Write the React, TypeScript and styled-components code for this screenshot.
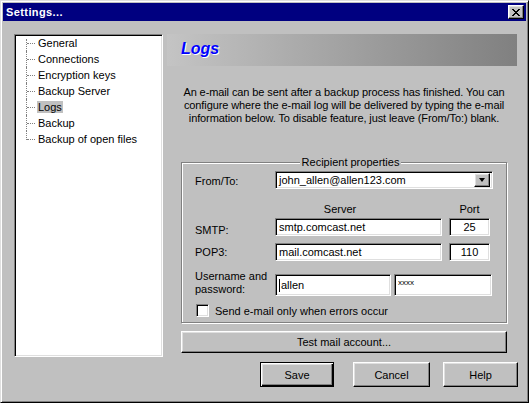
import React from "react";
import styled, { createGlobalStyle, css } from "styled-components";

const GlobalStyle = createGlobalStyle`
  html, body {
    margin: 0;
    padding: 0;
    background: #ffffff;
  }
  body {
    font-family: "Liberation Sans", Arial, sans-serif;
    font-size: 11px;
    color: #000;
  }
`;

const raised = css`
  border: 1px solid;
  border-color: #ffffff #000000 #000000 #ffffff;
  box-shadow: inset -1px -1px #808080, inset 1px 1px #dfdfdf;
`;

const sunken = css`
  border: 1px solid;
  border-color: #808080 #ffffff #ffffff #808080;
  box-shadow: inset 1px 1px #000000, inset -1px -1px #dfdfdf;
`;

const Window = styled.div`
  box-sizing: border-box;
  width: 529px;
  height: 403px;
  padding: 3px;
  background: #c0c0c0;
  border: 1px solid;
  border-color: #dfdfdf #000000 #000000 #dfdfdf;
  box-shadow: inset 1px 1px #ffffff, inset -1px -1px #808080;
  display: flex;
  flex-direction: column;
`;

const TitleBar = styled.div`
  height: 18px;
  margin: -1px -1px 0 -1px;
  background: #000080;
  display: flex;
  align-items: center;
  justify-content: space-between;
  padding: 0 2px 0 3px;
`;

const Title = styled.span`
  color: #ffffff;
  font-weight: bold;
  font-size: 11px;
  letter-spacing: 0.4px;
`;

const CloseButton = styled.div`
  box-sizing: border-box;
  width: 16px;
  height: 14px;
  background: #c0c0c0;
  ${raised};
  display: flex;
  align-items: center;
  justify-content: center;
`;

const Body = styled.div`
  display: flex;
  gap: 4px;
  padding: 13px 0 0 10px;
`;

const Tree = styled.ul`
  box-sizing: border-box;
  width: 149px;
  height: 323px;
  margin: 0;
  padding: 0 0 0 11px;
  list-style: none;
  background: #ffffff;
  ${sunken};
`;

const TreeItem = styled.li<{ $first?: boolean; $last?: boolean }>`
  position: relative;
  height: 16px;
  line-height: 16px;
  padding-left: 11px;

  &::before {
    content: "";
    position: absolute;
    left: 1px;
    top: 8px;
    width: 8px;
    border-top: 1px dotted #808080;
  }

  &::after {
    content: "";
    position: absolute;
    left: 0;
    top: ${(p) => (p.$first ? "4px" : "0")};
    height: ${(p) => (p.$last ? "9px" : p.$first ? "12px" : "16px")};
    border-left: 1px dotted #808080;
  }
`;

const ItemLabel = styled.span<{ $selected?: boolean }>`
  display: inline-block;
  line-height: 12px;
  padding: 0 1px;
  background: ${(p) => (p.$selected ? "#c0c0c0" : "transparent")};
`;

const Panel = styled.div`
  width: 350px;
  display: flex;
  flex-direction: column;
`;

const Header = styled.div`
  box-sizing: border-box;
  height: 32px;
  padding: 5px 0 0 14px;
  background: linear-gradient(to right, #c4c4c4, #808080);
`;

const HeaderTitle = styled.span`
  font-size: 16px;
  line-height: 20px;
  font-weight: bold;
  font-style: italic;
  color: #0000ff;
  text-shadow: 1px 1px 0 #ffffff;
`;

const Intro = styled.p`
  margin: 20px 0 0 4px;
  line-height: 13px;
  text-align: center;
  letter-spacing: -0.1px;
`;

const Inner = styled.div`
  margin: 0 10px 0 14px;
  display: flex;
  flex-direction: column;
`;

const Group = styled.fieldset`
  margin: 31px 0 0 0;
  padding: 2px 0 5px 13px;
  border: 1px solid #808080;
  box-shadow: inset 1px 1px #ffffff, 1px 1px #ffffff;
  display: flex;
  flex-direction: column;
`;

const Legend = styled.legend`
  margin: 0 auto;
  padding: 0 2px;
  line-height: 13px;
  background: #c0c0c0;
`;

const Row = styled.div<{ $gap?: number; $end?: boolean }>`
  display: flex;
  align-items: ${(p) => (p.$end ? "flex-end" : "center")};
  margin-top: ${(p) => p.$gap ?? 0}px;
`;

const Label = styled.span<{ $drop?: number }>`
  width: 80px;
  flex: none;
  line-height: 13px;
  position: relative;
  top: ${(p) => p.$drop ?? 0}px;
`;

const ColumnHead = styled.span<{ $width: number; $shift?: number }>`
  width: ${(p) => p.$width}px;
  text-align: center;
  line-height: 13px;
  margin-left: ${(p) => p.$shift ?? 0}px;
`;

const Field = styled.div<{ $width: number; $height?: number; $center?: boolean }>`
  box-sizing: border-box;
  width: ${(p) => p.$width}px;
  height: ${(p) => p.$height ?? 18}px;
  flex: none;
  padding: 0 3px;
  background: #ffffff;
  ${sunken};
  display: flex;
  align-items: center;
  justify-content: ${(p) => (p.$center ? "center" : "flex-start")};
  white-space: nowrap;
  overflow: hidden;
`;

const Caret = styled.span`
  width: 1px;
  height: 13px;
  background: #000;
  margin-right: 1px;
`;

const Masked = styled.span`
  align-self: flex-start;
  margin-top: 4px;
  font-size: 8px;
  line-height: 8px;
`;

const DropButton = styled.div`
  box-sizing: border-box;
  width: 16px;
  height: 14px;
  margin-left: auto;
  margin-right: -1px;
  background: #c0c0c0;
  ${raised};
  display: flex;
  align-items: center;
  justify-content: center;
`;

const Arrow = styled.span`
  width: 0;
  height: 0;
  border-left: 3.5px solid transparent;
  border-right: 3.5px solid transparent;
  border-top: 4px solid #000;
`;

const Check = styled.span`
  box-sizing: border-box;
  width: 13px;
  height: 13px;
  margin: 0 6px 0 1px;
  background: #ffffff;
  ${sunken};
`;

const Button = styled.button<{
  $width?: number;
  $height?: number;
  $default?: boolean;
  $after?: number;
}>`
  box-sizing: border-box;
  width: ${(p) => (p.$width ? `${p.$width}px` : "100%")};
  height: ${(p) => p.$height ?? 25}px;
  margin: 0 ${(p) => p.$after ?? 0}px 0 0;
  padding: 0;
  font: inherit;
  color: #000;
  background: #c0c0c0;
  ${(p) =>
    p.$default
      ? css`
          border: 1px solid #000;
          box-shadow: inset 1px 1px #ffffff, inset -1px -1px #000000,
            inset -2px -2px #808080, inset 2px 2px #dfdfdf;
        `
      : raised};
`;

const TestButton = styled(Button)`
  margin-top: 8px;
`;

const Actions = styled.div`
  display: flex;
  justify-content: flex-end;
  align-items: center;
  gap: 13px;
  margin: 9px -1px 0 0;
`;

const items = [
  "General",
  "Connections",
  "Encryption keys",
  "Backup Server",
  "Logs",
  "Backup",
  "Backup of open files",
];

export default function App() {
  return (
    <>
      <GlobalStyle />
      <Window>
        <TitleBar>
          <Title>Settings...</Title>
          <CloseButton>
            <svg width="8" height="7" viewBox="0 0 8 7">
              <path
                d="M0 0h2v1h1v1h2V1h1V0h2v1H7v1H6v1H5v1h1v1h1v1h1v1H6V6H5V5H3v1H2v1H0V6h1V5h1V4h1V3H2V2H1V1H0z"
                fill="#000"
              />
            </svg>
          </CloseButton>
        </TitleBar>
        <Body>
          <Tree>
            {items.map((name, i) => (
              <TreeItem
                key={name}
                $first={i === 0}
                $last={i === items.length - 1}
              >
                <ItemLabel $selected={name === "Logs"}>{name}</ItemLabel>
              </TreeItem>
            ))}
          </Tree>
          <Panel>
            <Header>
              <HeaderTitle>Logs</HeaderTitle>
            </Header>
            <Intro>
              An e-mail can be sent after a backup process has finished. You can
              <br />
              configure where the e-mail log will be delivered by typing the e-mail
              <br />
              information below. To disable feature, just leave (From/To:) blank.
            </Intro>
            <Inner>
              <Group>
                <Legend>Recipient properties</Legend>
                <Row>
                  <Label $drop={1}>From/To:</Label>
                  <Field $width={218}>
                    john_allen@allen123.com
                    <DropButton>
                      <Arrow />
                    </DropButton>
                  </Field>
                </Row>
                <Row $gap={14}>
                  <ColumnHead $width={130} $shift={80}>
                    Server
                  </ColumnHead>
                  <ColumnHead $width={41} $shift={44}>
                    Port
                  </ColumnHead>
                </Row>
                <Row $gap={2}>
                  <Label $drop={3}>SMTP:</Label>
                  <Field $width={167}>smtp.comcast.net</Field>
                  <Field $width={41} $center style={{ marginLeft: 7 }}>
                    25
                  </Field>
                </Row>
                <Row $gap={7}>
                  <Label>POP3:</Label>
                  <Field $width={167}>mail.comcast.net</Field>
                  <Field $width={41} $center style={{ marginLeft: 7 }}>
                    110
                  </Field>
                </Row>
                <Row $gap={9} $end>
                  <Label>
                    Username and
                    <br />
                    password:
                  </Label>
                  <Field $width={116} $height={22}>
                    <Caret />
                    allen
                  </Field>
                  <Field $width={98} $height={22} style={{ marginLeft: 3 }}>
                    <Masked>xxxx</Masked>
                  </Field>
                </Row>
                <Row $gap={8}>
                  <Check />
                  Send e-mail only when errors occur
                </Row>
              </Group>
              <TestButton $height={22}>Test mail account...</TestButton>
            </Inner>
            <Actions>
              <Button $width={74} $default $after={6}>
                Save
              </Button>
              <Button $width={77}>Cancel</Button>
              <Button $width={75}>Help</Button>
            </Actions>
          </Panel>
        </Body>
      </Window>
    </>
  );
}
